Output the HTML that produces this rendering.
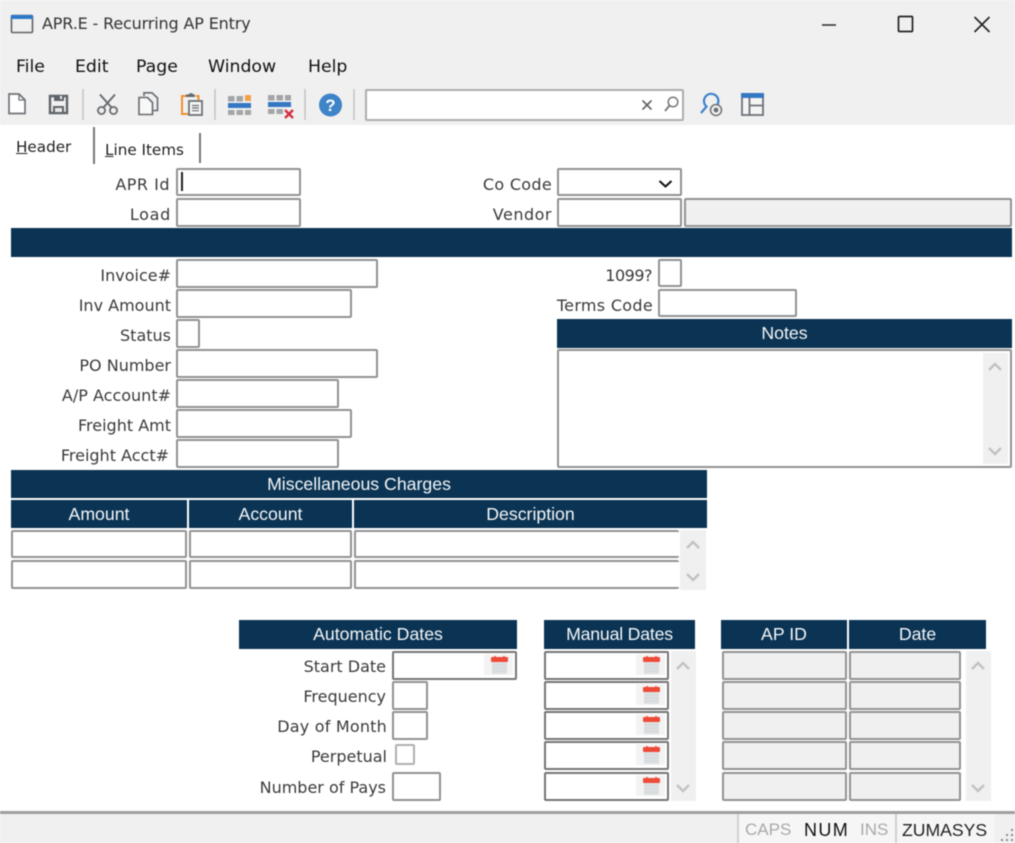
<!DOCTYPE html>
<html><head><meta charset="utf-8"><title>APR.E - Recurring AP Entry</title>
<style>
html,body{margin:0;padding:0}
body{width:1015px;height:843px;position:relative;overflow:hidden;background:#fff;font-family:"DejaVu Sans","Liberation Sans",sans-serif;color:#333;filter:blur(.4px)}
div{position:absolute;box-sizing:border-box}
.i{border:2px solid #929292;border-radius:2px;background:#fff}
.d{border-color:#767676}
.g{background:#f0f0f0}
.h{background:#0b3454;color:#f4f6f8;font:17.7px/28.500px "Liberation Sans",sans-serif;text-align:center}
.l{left:0;height:28px;line-height:30px;font-size:16px;text-align:right;white-space:nowrap;color:#3a3a3a}
.m{top:55px;font-size:17.3px;line-height:24px;color:#111;white-space:nowrap}
.s{background:#f0f0f0}
svg{position:absolute;overflow:visible}
</style></head><body>

<div style="left:0;top:0;width:1015px;height:125px;background:#f0f0f0"></div>
<div style="left:42px;top:13px;font-size:16px;line-height:22px;color:#333;white-space:nowrap;letter-spacing:-.15px">APR.E - Recurring AP Entry</div>
<div class="m" style="left:16px">File</div>
<div class="m" style="left:75px">Edit</div>
<div class="m" style="left:136px">Page</div>
<div class="m" style="left:208px">Window</div>
<div class="m" style="left:308px">Help</div>

<div style="left:365px;top:89px;width:319px;height:32px;background:#fff;border:2px solid #adadad;border-radius:2px"></div>

<svg style="left:0;top:0" width="1015" height="125" viewBox="0 0 1015 125" fill="none">
<rect x="11.5" y="15.5" width="21" height="17" rx="1" stroke="#5f6468" stroke-width="1.6"/>
<rect x="11" y="15" width="22" height="4" fill="#2e78c8"/>
<path d="M822 25H836" stroke="#333" stroke-width="1.6"/>
<rect x="898.5" y="16.5" width="14" height="15" rx="1" stroke="#222" stroke-width="1.7"/>
<path d="M974.5 17L989.5 32M989.5 17L974.5 32" stroke="#222" stroke-width="1.6"/>
<path d="M9 94H19L25 100V113.500H9Z" fill="#fff" stroke="#6d7278" stroke-width="1.7"/>
<path d="M19 94V100H25" stroke="#6d7278" stroke-width="1.3"/>
<path d="M50 96H67V113H50Z" fill="#f0f0f0" stroke="#5f646a" stroke-width="2.4"/>
<rect x="54" y="95" width="10" height="6" fill="#5f646a"/>
<rect x="60" y="96" width="2" height="3" fill="#f0f0f0"/>
<rect x="53" y="106" width="11" height="7" fill="#5f646a"/>
<rect x="55" y="108" width="7" height="4" fill="#e8e8e8"/>
<path d="M83 89V120M215 89V120M305 89V120M354 89V120" stroke="#c4c4c4" stroke-width="1.5"/>
<circle cx="101.500" cy="110.500" r="3.600" stroke="#666b70" stroke-width="1.800"/>
<circle cx="113.500" cy="110.500" r="3.600" stroke="#666b70" stroke-width="1.800"/>
<path d="M103.500 107.500L115 94.500M111.500 107.500L100 94.500" stroke="#666b70" stroke-width="1.900"/>
<path d="M144 96V92.800H152L157.500 98V110.500H153" fill="#f0f0f0" stroke="#666b70" stroke-width="1.600"/>
<path d="M139 97.500H147.500L152.500 102.500V114.500H139Z" fill="#f8f8f8" stroke="#666b70" stroke-width="1.600"/>
<path d="M187 96H182V114H189" stroke="#ef8f2c" stroke-width="2"/>
<path d="M196 96H198.500V100" stroke="#ef8f2c" stroke-width="2"/>
<path d="M186 97V94.500H188.500A3 3 0 0 1 193.500 94.500H195V97Z" fill="#666b70"/>
<rect x="189" y="101" width="13" height="14" fill="#f8f8f8" stroke="#666b70" stroke-width="1.700"/>
<path d="M192 105.500H199M192 108H199M192 110.700H199" stroke="#666b70" stroke-width="1.200"/>
<path d="M228 96h6.500v5.500H228ZM236.500 96H243v5.500h-6.500Z" fill="#a3a5a8"/>
<rect x="245" y="95" width="6" height="6" fill="#f2a04a"/>
<rect x="228" y="103" width="23" height="5" fill="#3477c2"/>
<path d="M228 110h6.500v5H228ZM236.500 110H243v5h-6.500ZM245 110h6v5h-6Z" fill="#a3a5a8"/>
<path d="M268 95h6.500v5.500H268ZM276.500 95H283v5.500h-6.500ZM285 95h6v5.500h-6Z" fill="#a3a5a8"/>
<rect x="268" y="102" width="23" height="5" fill="#3477c2"/>
<path d="M268 109h6.500v5H268ZM276.500 109H283v5h-6.500Z" fill="#a3a5a8"/>
<path d="M285 110L293 118M293 110L285 118" stroke="#d32f3f" stroke-width="2.400"/>
<circle cx="330.500" cy="105" r="11.500" fill="#3f83c8"/>
<text x="330.500" y="111" text-anchor="middle" font-family="Liberation Sans,sans-serif" font-weight="700" font-size="17" fill="#fff">?</text>
<path d="M642.500 100.500L651.500 109.500M651.500 100.500L642.500 109.500" stroke="#5f6468" stroke-width="1.600"/>
<circle cx="673" cy="102" r="4.800" stroke="#777" stroke-width="1.500"/>
<path d="M669.500 105.500L665 111" stroke="#777" stroke-width="1.800"/>
<path d="M701 113L706.500 106.500A7.200 7.200 0 1 1 717.500 104.500" stroke="#3c82cc" stroke-width="2.200"/>
<circle cx="716" cy="110" r="5.500" fill="#f0f0f0" stroke="#6d7278" stroke-width="1.500"/>
<circle cx="716" cy="110" r="2.400" fill="#6d7278"/>
<rect x="742" y="94" width="21" height="21" stroke="#6d7278" stroke-width="1.800" fill="#f4f4f4"/>
<rect x="741" y="93" width="23" height="5" fill="#3477c2"/>
<path d="M749.500 98V115M749.500 105.500H763" stroke="#6d7278" stroke-width="1.800"/>
</svg>

<!-- tabs -->
<div style="left:16px;top:136px;font-size:15.2px;line-height:22px;color:#222;white-space:nowrap"><u>H</u>eader</div>
<div style="left:93px;top:127px;width:2px;height:37px;background:#777"></div>
<div style="left:105px;top:139px;font-size:15.2px;line-height:22px;color:#222;white-space:nowrap"><u>L</u>ine Items</div>
<div style="left:199px;top:133px;width:2px;height:30px;background:#777"></div>

<!-- top fields -->
<div class="l" style="top:170px;width:170px;letter-spacing:.5px">APR Id</div>
<div class="i" style="left:176px;top:168px;width:125px;height:28px"></div>
<div style="left:181px;top:172px;width:2px;height:19px;background:#222"></div>
<div class="l" style="top:200px;width:171px;letter-spacing:.7px">Load</div>
<div class="i" style="left:176px;top:198px;width:125px;height:29px"></div>

<div class="l" style="top:170px;width:552px;letter-spacing:.3px">Co Code</div>
<div class="i" style="left:557px;top:168px;width:125px;height:28px"></div>
<svg style="left:0;top:0" width="1015" height="200" fill="none"><path d="M659.500 181L665.500 186.500L671.500 181" stroke="#111" stroke-width="2"/></svg>
<div class="l" style="top:200px;width:552px;letter-spacing:.5px">Vendor</div>
<div class="i" style="left:557px;top:198px;width:125px;height:29px"></div>
<div class="i g" style="left:684px;top:198px;width:328px;height:29px"></div>

<div class="h" style="left:11px;top:228px;width:1001px;height:29px"></div>

<!-- left column -->
<div class="l" style="top:261px;width:171px">Invoice#</div>
<div class="i" style="left:176px;top:259px;width:202px;height:29px"></div>
<div class="l" style="top:291px;width:171px">Inv Amount</div>
<div class="i" style="left:176px;top:289px;width:176px;height:29px"></div>
<div class="l" style="top:321px;width:171px">Status</div>
<div class="i" style="left:176px;top:319px;width:24px;height:29px"></div>
<div class="l" style="top:351px;width:171px">PO Number</div>
<div class="i" style="left:176px;top:349px;width:202px;height:29px"></div>
<div class="l" style="top:381px;width:171px">A/P Account#</div>
<div class="i" style="left:176px;top:379px;width:163px;height:29px"></div>
<div class="l" style="top:411px;width:171px">Freight Amt</div>
<div class="i" style="left:176px;top:409px;width:176px;height:29px"></div>
<div class="l" style="top:441px;width:169px">Freight Acct#</div>
<div class="i" style="left:176px;top:439px;width:163px;height:29px"></div>

<!-- right column -->
<div class="l" style="top:261px;width:652px;letter-spacing:-.5px">1099?</div>
<div class="i" style="left:658px;top:259px;width:24px;height:28px"></div>
<div class="l" style="top:291px;width:653px;letter-spacing:.3px">Terms Code</div>
<div class="i" style="left:658px;top:289px;width:139px;height:28px"></div>
<div class="h" style="left:557px;top:319px;width:455px;height:29px">Notes</div>
<div class="i" style="left:557px;top:349px;width:455px;height:119px"></div>
<div class="s" style="left:983px;top:353px;width:25px;height:111px"></div>

<!-- misc charges -->
<div class="h" style="left:11px;top:470px;width:696px;height:28px">Miscellaneous Charges</div>
<div class="h" style="left:11px;top:500px;width:176px;height:28px">Amount</div>
<div class="h" style="left:189px;top:500px;width:163px;height:28px">Account</div>
<div class="h" style="left:354px;top:500px;width:353px;height:28px">Description</div>
<div class="i" style="left:11px;top:530px;width:176px;height:28px"></div>
<div class="i" style="left:189px;top:530px;width:163px;height:28px"></div>
<div class="i" style="left:354px;top:530px;width:325px;height:28px;border-right:0"></div>
<div class="i" style="left:11px;top:560px;width:176px;height:29px"></div>
<div class="i" style="left:189px;top:560px;width:163px;height:29px"></div>
<div class="i" style="left:354px;top:560px;width:325px;height:29px;border-right:0"></div>
<div class="s" style="left:680px;top:530px;width:26px;height:60px"></div>

<!-- dates -->
<div class="h" style="left:239px;top:620px;width:278px;height:29px">Automatic Dates</div>
<div class="h" style="left:544px;top:620px;width:151px;height:29px;letter-spacing:-.2px">Manual Dates</div>
<div class="h" style="left:721px;top:620px;width:126px;height:29px">AP ID</div>
<div class="h" style="left:849px;top:620px;width:137px;height:29px">Date</div>

<div class="l" style="top:652px;width:386px">Start Date</div>
<div class="i d" style="left:392px;top:651px;width:125px;height:29px"></div>
<div class="l" style="top:682px;width:386px">Frequency</div>
<div class="i" style="left:392px;top:681px;width:36px;height:29px"></div>
<div class="l" style="top:712px;width:387px;letter-spacing:.2px">Day of Month</div>
<div class="i" style="left:392px;top:711px;width:36px;height:29px"></div>
<div class="l" style="top:742px;width:387px">Perpetual</div>
<div class="i" style="left:395px;top:744px;width:20px;height:21px;border-color:#b0b0b0"></div>
<div class="l" style="top:773px;width:386px">Number of Pays</div>
<div class="i" style="left:392px;top:772px;width:49px;height:29px"></div>

<div class="i d" style="left:544px;top:651px;width:125px;height:29px"></div>
<div class="i d" style="left:544px;top:681px;width:125px;height:29px"></div>
<div class="i d" style="left:544px;top:711px;width:125px;height:29px"></div>
<div class="i d" style="left:544px;top:741px;width:125px;height:29px"></div>
<div class="i d" style="left:544px;top:772px;width:125px;height:29px"></div>
<div class="s" style="left:671px;top:651px;width:25px;height:150px"></div>

<div class="i g" style="left:722px;top:651px;width:125px;height:29px"></div>
<div class="i g" style="left:849px;top:651px;width:112px;height:29px"></div>
<div class="i g" style="left:722px;top:681px;width:125px;height:29px"></div>
<div class="i g" style="left:849px;top:681px;width:112px;height:29px"></div>
<div class="i g" style="left:722px;top:711px;width:125px;height:29px"></div>
<div class="i g" style="left:849px;top:711px;width:112px;height:29px"></div>
<div class="i g" style="left:722px;top:741px;width:125px;height:29px"></div>
<div class="i g" style="left:849px;top:741px;width:112px;height:29px"></div>
<div class="i g" style="left:722px;top:772px;width:125px;height:29px"></div>
<div class="i g" style="left:849px;top:772px;width:112px;height:29px"></div>
<div class="s" style="left:966px;top:651px;width:25px;height:150px"></div>

<svg style="left:0;top:0" width="1015" height="843" fill="none">
<defs>
<g id="cal">
<rect width="29" height="21" fill="#f3f3f3"/>
<rect x="8" y="7" width="15" height="13" fill="#dde1e3"/>
<path d="M8 11H23M8 14H23M8 17H23" stroke="#cfd4d6" stroke-width=".8"/>
<rect x="7" y="3" width="17" height="5" rx="1" fill="#ee4a38"/>
<path d="M11 2V4M20 2V4" stroke="#ee4a38" stroke-width="1.500"/>
</g>
<path id="up" d="M-6 4L0 -2L6 4" stroke="#c2c2c2" stroke-width="2.400"/>
<path id="dn" d="M-6 -3L0 3L6 -3" stroke="#c2c2c2" stroke-width="2.400"/>
</defs>
<use href="#cal" x="484" y="654"/>
<use href="#cal" x="636" y="654"/>
<use href="#cal" x="636" y="684"/>
<use href="#cal" x="636" y="714"/>
<use href="#cal" x="636" y="744"/>
<use href="#cal" x="636" y="775"/>
<use href="#up" x="995" y="366"/>
<use href="#dn" x="995" y="451"/>
<use href="#up" x="693" y="544"/>
<use href="#dn" x="693" y="577"/>
<use href="#up" x="683" y="665"/>
<use href="#dn" x="683" y="788"/>
<use href="#up" x="978" y="665"/>
<use href="#dn" x="978" y="788"/>
</svg>

<!-- status bar -->
<div style="left:0;top:811px;width:1015px;height:32px;background:#f0f0f0;border-top:3px solid #9f9f9f"></div>
<div style="left:737px;top:814px;width:2px;height:29px;background:#d0d0d0"></div>
<div style="left:895px;top:814px;width:2px;height:29px;background:#d0d0d0"></div>
<div style="left:739px;top:814px;width:156px;height:29px;background:#f6f6f6"></div>
<div style="left:897px;top:814px;width:98px;height:29px;background:#f6f6f6"></div>
<div style="left:745px;top:819px;font:17px/22px 'Liberation Sans',sans-serif;color:#a9a9a9">CAPS</div>
<div style="left:804px;top:819px;font:18px/22px 'Liberation Sans',sans-serif;color:#111;letter-spacing:1.400px">NUM</div>
<div style="left:860px;top:819px;font:17px/22px 'Liberation Sans',sans-serif;color:#a9a9a9">INS</div>
<div style="left:902px;top:819px;font:17.6px/22px 'Liberation Sans',sans-serif;color:#222">ZUMASYS</div>
<svg style="left:0;top:0" width="1015" height="843"><path d="M1011 829h2v2h-2zM1006 834h2v2h-2zM1011 834h2v2h-2zM1001 839h2v2h-2zM1006 839h2v2h-2zM1011 839h2v2h-2z" fill="#8a8a8a"/></svg>
</body></html>
